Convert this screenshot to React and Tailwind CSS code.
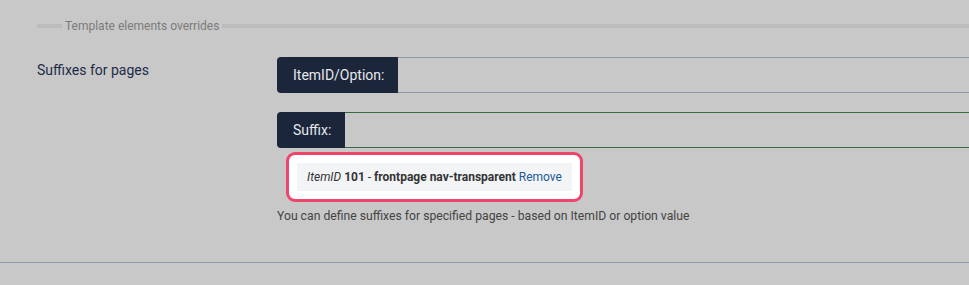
import React from 'react';

function InputGroup({ label, borderColor }) {
    return (
        <div className="flex h-[36px]">
            <span className="flex items-center rounded-l-[4px] bg-[#1b263a] pl-[16px] pr-[14px] text-[14px] text-[#e6e8ec]">
                {label}
            </span>
            <div className={`flex-1 border-y ${borderColor}`} />
        </div>
    );
}

export default function App() {
    return (
        <div className="h-[285px] w-full overflow-hidden bg-[#c8c8c8] pt-[19px] font-['Roboto',sans-serif]">
            {/* fieldset legend */}
            <div className="ml-[37px] flex items-center">
                <div className="h-[4px] w-[25px] bg-[#bcbcbc]" />
                <span className="px-[3px] text-[12px] leading-[14px] text-[#7b7b7b]">Template elements overrides</span>
                <div className="h-[4px] flex-1 bg-[#bcbcbc]" />
            </div>

            <div className="mt-[24px] flex">
                <div className="w-[277px] shrink-0 pl-[37px] pt-[3px] text-[14px] leading-[20px] text-[#1c2b47]">
                    Suffixes for pages
                </div>
                <div className="flex-1">
                    <InputGroup label="ItemID/Option:" borderColor="border-[#8e97a3]" />
                    <div className="mt-[19px]">
                        <InputGroup label="Suffix:" borderColor="border-[#3b6a42]" />
                    </div>
                    <div className="ml-[9px] mt-[4px] inline-block rounded-[9px] border-[3px] border-[#f0446b] bg-white p-[8px]">
                        <div className="bg-[#f3f4f6] px-[10px] py-[6px] text-[12px] leading-[16px] text-[#333]">
                            <i>ItemID</i> <b>101</b> - <b>frontpage nav-transparent</b>{' '}
                            <span className="text-[#1a5a96]">Remove</span>
                        </div>
                    </div>
                    <p className="mt-[6px] text-[12.2px] leading-[16px] text-[#444]">
                        You can define suffixes for specified pages - based on ItemID or option value
                    </p>
                </div>
            </div>

            <div className="mt-[38px] h-px bg-[#8e9bb0]" />
        </div>
    );
}
